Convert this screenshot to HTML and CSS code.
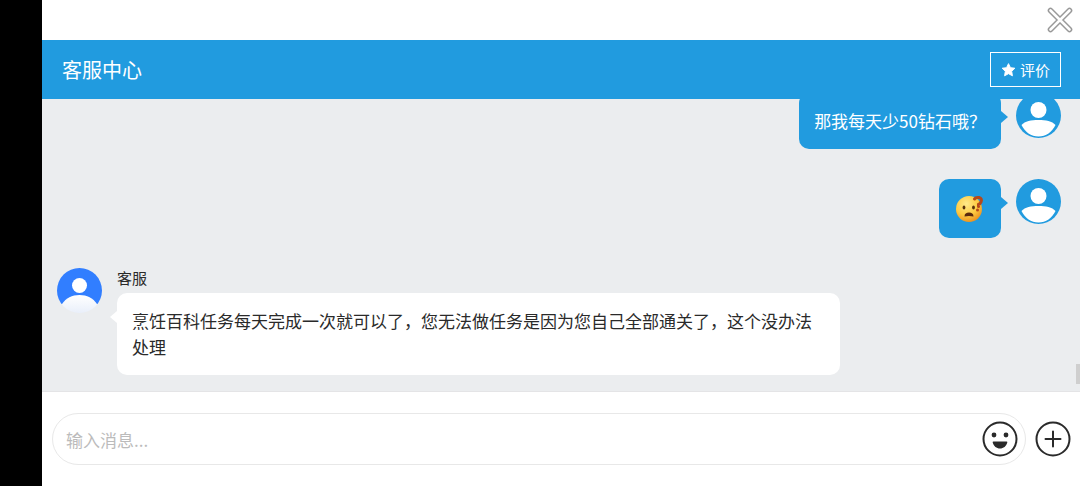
FILE: index.html
```html
<!DOCTYPE html>
<html lang="zh-CN">
<head>
    <meta charset="UTF-8">
    <meta name="viewport" content="width=device-width, initial-scale=1.0">
    <title>客服中心</title>
    <link rel="stylesheet" href="styles.css">
</head>
<body>
    <div class="notch"></div>
    <div class="page">
        <div class="topbar">
            <button type="button" class="close-btn" aria-label="关闭">
                <svg width="26" height="26" viewBox="0 0 26 26" fill="none" stroke-linecap="round">
                    <path d="M3.5 3.5L22.5 22.5M22.5 3.5L3.5 22.5" stroke="#999" stroke-width="5.6"/>
                    <path d="M3.5 3.5L22.5 22.5M22.5 3.5L3.5 22.5" stroke="#fff" stroke-width="2.6"/>
                </svg>
            </button>
        </div>

        <header class="header">
            <h1>客服中心</h1>
            <button type="button" class="rate-btn">
                <svg width="15" height="16" viewBox="0 0 16 16" fill="#fff" stroke="#fff" stroke-linejoin="round">
                    <path d="M8 1.2L10.1 5.5L14.8 6.1L11.4 9.4L12.2 14.2L8 11.9L3.800 14.2L4.6 9.4L1.2 6.1L5.9 5.5Z"/>
                </svg>
                <span>评价</span>
            </button>
        </header>

        <main class="chat">
            <div class="message mine">
                <div class="bubble">那我每天少50钻石哦？</div>
                <svg class="avatar" viewBox="0 0 45 45">
                    <circle cx="22.5" cy="22.5" r="22.5" fill="#219bdf"/>
                    <circle cx="22.5" cy="17" r="8" fill="#fff"/>
                    <path d="M5.5 32C9 28 15 27 22.5 27C30 27 36 28 39.5 32C36 39 30 43.5 22.5 43.5C15 43.5 9 39 5.5 32Z" fill="#fff"/>
                </svg>
            </div>

            <div class="message mine">
                <div class="bubble">
                    <svg class="emoji" viewBox="0 0 32 29" role="img" aria-label="疑问">
                        <defs>
                            <radialGradient id="face" cx="40%" cy="30%" r="72%">
                                <stop offset="0" stop-color="#ffe98a"/>
                                <stop offset="0.6" stop-color="#fdcb42"/>
                                <stop offset="1" stop-color="#ec9220"/>
                            </radialGradient>
                        </defs>
                        <circle cx="15" cy="15" r="13" fill="url(#face)"/>
                        <ellipse cx="10" cy="13.5" rx="1.4" ry="2" fill="#59320c"/>
                        <ellipse cx="19.5" cy="13.5" rx="1.4" ry="2" fill="#59320c"/>
                        <path d="M10.5 22.5C10.5 19.500 12.3 18.5 15 18.5S19.5 19.500 19.5 22.5Q15 21.5 10.5 22.5Z" fill="#5b2a0e"/>
                        <path d="M20.5 5Q21.5 3 25 3.5Q28.5 4.5 27 8Q26 10 24.5 10.5V12.500" fill="none" stroke="#b5481b" stroke-width="3" stroke-linecap="round"/>
                        <circle cx="23.5" cy="16" r="1.5" fill="#b5481b"/>
                    </svg>
                </div>
                <svg class="avatar" viewBox="0 0 45 45">
                    <circle cx="22.5" cy="22.5" r="22.5" fill="#219bdf"/>
                    <circle cx="22.5" cy="17" r="8" fill="#fff"/>
                    <path d="M5.5 32C9 28 15 27 22.5 27C30 27 36 28 39.5 32C36 39 30 43.5 22.5 43.5C15 43.5 9 39 5.5 32Z" fill="#fff"/>
                </svg>
            </div>

            <div class="message agent">
                <svg class="avatar" viewBox="0 0 45 45">
                    <defs>
                        <linearGradient id="body" x1="0" y1="0" x2="0" y2="1">
                            <stop offset="0" stop-color="#fff"/>
                            <stop offset="1" stop-color="#e9effa"/>
                        </linearGradient>
                        <clipPath id="round"><circle cx="22.5" cy="22.5" r="22.5"/></clipPath>
                    </defs>
                    <g clip-path="url(#round)">
                        <rect width="45" height="36" fill="#317eff"/>
                        <circle cx="22.5" cy="17.5" r="7.5" fill="#fff"/>
                        <path d="M5 36C9 30 15 27 22.5 27S36 30 40 36L45 45H0Z" fill="url(#body)"/>
                    </g>
                </svg>
                <div class="content">
                    <div class="name">客服</div>
                    <div class="bubble">烹饪百科任务每天完成一次就可以了，您无法做任务是因为您自己全部通关了，这个没办法处理</div>
                </div>
            </div>

            <div class="scroll-thumb"></div>
        </main>

        <form class="composer">
            <div class="input-box">
                <input type="text" placeholder="输入消息..." aria-label="输入消息">
                <button type="button" class="icon-btn" aria-label="表情">
                    <svg width="36" height="36" viewBox="0 0 36 36">
                        <circle cx="18" cy="18" r="16.5" fill="none" stroke="#2a2a2a" stroke-width="2"/>
                        <circle cx="12" cy="14" r="2.4" fill="#2a2a2a"/>
                        <circle cx="24" cy="14" r="2.4" fill="#2a2a2a"/>
                        <path d="M11.5 20.500H24.5Q25.6 20.500 25.3 21.5C24.3 25.3 21.5 27.5 18 27.5S11.7 25.3 10.7 21.5Q10.4 20.500 11.5 20.500Z" fill="#2a2a2a"/>
                    </svg>
                </button>
            </div>
            <button type="button" class="icon-btn" aria-label="更多">
                <svg width="36" height="36" viewBox="0 0 36 36" fill="none" stroke="#2a2a2a" stroke-width="2" stroke-linecap="round">
                    <circle cx="18" cy="18" r="16.5"/>
                    <path d="M18 10.5V25.5M10.5 18H25.5"/>
                </svg>
            </button>
        </form>
    </div>
</body>
</html>
```

FILE: styles.css
```css
* {
    margin: 0;
    padding: 0;
    box-sizing: border-box;
}

body {
    font-family: "Noto Sans CJK SC", sans-serif;
    font-size: 17px;
    color: #2a2a2a;
    background: #fff;
    height: 100vh;
    display: flex;
    overflow: hidden;
}

button {
    font-family: inherit;
    background: none;
    border: none;
    cursor: pointer;
}

svg {
    display: block;
}

.notch {
    width: 42px;
    background: #000;
    flex-shrink: 0;
}

.page {
    flex: 1;
    min-width: 0;
    display: flex;
    flex-direction: column;
}

.topbar {
    display: flex;
    justify-content: flex-end;
    padding: 7px;
}

.header {
    display: flex;
    align-items: center;
    justify-content: space-between;
    padding: 12px 19px 12px 20px;
    background: #219bdf;
    color: #fff;
}

.header h1 {
    font-size: 20px;
    line-height: 24px;
    font-weight: normal;
}

.rate-btn {
    display: flex;
    align-items: center;
    gap: 4px;
    padding: 0 10px;
    border: 1px solid #fff;
    color: #fff;
    font-size: 15px;
    line-height: 33px;
}

.chat {
    flex: 1;
    min-height: 0;
    position: relative;
    display: flex;
    flex-direction: column;
    justify-content: flex-end;
    gap: 30px;
    padding: 0 19px 16px 15px;
    background: #ebedef;
    overflow: hidden;
}

.message {
    display: flex;
    align-items: flex-start;
    gap: 15px;
    flex-shrink: 0;
}

.mine {
    justify-content: flex-end;
}

.avatar {
    width: 45px;
    height: 45px;
    flex-shrink: 0;
}

.content {
    max-width: 72%;
}

.name {
    font-size: 15px;
    line-height: 20px;
    margin-bottom: 5px;
}

.bubble {
    position: relative;
    padding: 15px;
    border-radius: 10px;
    line-height: 26px;
    background: #fff;
}

.mine .bubble {
    background: #219bdf;
    color: #fff;
}

/* small arrow pointing at the avatar */
.bubble::after {
    content: "";
    position: absolute;
    top: 18px;
    right: 100%;
    border: 6px solid transparent;
    border-left-width: 0;
    border-right: 7px solid #fff;
}

.mine .bubble::after {
    right: auto;
    left: 100%;
    border-right-width: 0;
    border-left: 7px solid #219bdf;
}

.emoji {
    width: 32px;
    height: 29px;
}

.scroll-thumb {
    position: absolute;
    right: 0;
    bottom: 7px;
    width: 4px;
    height: 20px;
    background: #cfcfcf;
}

.composer {
    display: flex;
    align-items: center;
    gap: 9px;
    padding: 21px 9px 21px 10px;
    border-top: 1px solid #e4e4e6;
}

.input-box {
    flex: 1;
    display: flex;
    align-items: center;
    padding: 7px 7px 7px 13px;
    border: 1px solid #e8e8e8;
    border-radius: 26px;
}

.input-box input {
    flex: 1;
    min-width: 0;
    border: none;
    outline: none;
    background: none;
    font-family: inherit;
    font-size: 17px;
    color: #222;
}

.input-box input::placeholder {
    color: #bbb;
}
```
